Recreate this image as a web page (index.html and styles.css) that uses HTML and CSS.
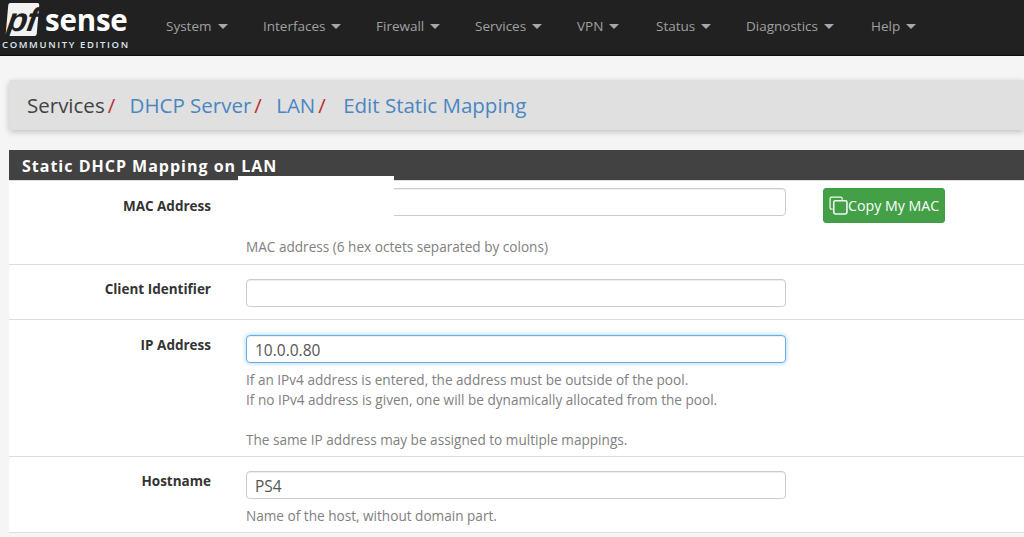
FILE: index.html
```html
<!DOCTYPE html>
<html lang="en">
<head>
<meta charset="utf-8">
<title>Static DHCP Mapping on LAN</title>
<link rel="stylesheet" href="styles.css">
</head>
<body>
<nav class="navbar">
  <div class="brand">
    <div class="logo-top"><span class="pf"><span class="pf-text">pf</span></span><span class="sense">sense</span></div>
    <div class="edition">COMMUNITY EDITION</div>
  </div>
  <ul class="menu">
    <li class="m1">System<i class="caret"></i></li>
    <li class="m2">Interfaces<i class="caret"></i></li>
    <li class="m3">Firewall<i class="caret"></i></li>
    <li class="m4">Services<i class="caret"></i></li>
    <li class="m5">VPN<i class="caret"></i></li>
    <li class="m6">Status<i class="caret"></i></li>
    <li class="m7">Diagnostics<i class="caret"></i></li>
    <li class="m8">Help<i class="caret"></i></li>
  </ul>
</nav>
<main class="content">
  <div class="crumbs">
    <span>Services</span><span class="sep">/</span>
    <a>DHCP Server</a><span class="sep">/</span>
    <a>LAN</a><span class="sep sep-last">/</span>
    <a>Edit Static Mapping</a>
  </div>
  <section class="panel">
    <h2 class="panel-title">Static DHCP Mapping on LAN</h2>
    <div class="mask"></div>
    <div class="row row-mac">
      <label>MAC Address</label>
      <div class="field">
        <input class="input" type="text">
        <p class="help help-mac">MAC address (6 hex octets separated by colons)</p>
      </div>
      <button class="btn" type="button">
        <svg class="copy" viewBox="0 0 18 18" width="19" height="19" aria-hidden="true"><path d="M3.500 12.500H2.500A1.500 1.500 0 0 1 1 11V2.500A1.500 1.500 0 0 1 2.500 1H11A1.500 1.500 0 0 1 12.500 2.500V3.500" fill="none" stroke="currentColor" stroke-width="1.200"/><rect x="4.500" y="4.500" width="12.500" height="12.500" rx="1.500" fill="none" stroke="currentColor" stroke-width="1.500"/></svg>Copy My MAC
      </button>
    </div>
    <div class="row row-client">
      <label>Client Identifier</label>
      <div class="field"><input class="input" type="text"></div>
    </div>
    <div class="row row-ip">
      <label>IP Address</label>
      <div class="field">
        <input class="input focus" type="text" value="10.0.0.80">
        <p class="help">If an IPv4 address is entered, the address must be outside of the pool.<br>If no IPv4 address is given, one will be dynamically allocated from the pool.<br><br>The same IP address may be assigned to multiple mappings.</p>
      </div>
    </div>
    <div class="row row-host">
      <label>Hostname</label>
      <div class="field">
        <input class="input" type="text" value="PS4">
        <p class="help help-host">Name of the host, without domain part.</p>
      </div>
    </div>
  </section>
</main>
</body>
</html>
```
FILE: styles.css
```css
* { box-sizing: border-box; }
html, body { margin: 0; height: 537px; overflow: hidden; }
body { background: #f5f5f5; font-family: "Open Sans", sans-serif; color: #333; }

.navbar { height: 56px; background: #212121; border-bottom: 1px solid #0d0d0d; display: flex; }
.brand { width: 166px; padding: 2px 0 0 2px; flex: none; }
.logo-top { display: flex; align-items: center; height: 35px; padding-left: 5px; }
.pf { display: block; flex: none; width: 31px; height: 33px; background: #f2f2f2; border-radius: 2px; transform: skewX(-5deg); text-align: center; }
.pf-text { display: block; color: #212121; font: italic 700 33px/33px "Liberation Sans", sans-serif; letter-spacing: -1px; transform: skewX(-4deg); }
.sense { color: #fff; font: 700 29.500px/28px "Open Sans", sans-serif; margin-left: 7px; letter-spacing: -.2px; }
.edition { color: #dfe6ee; font: 600 9.500px/12px "Open Sans", sans-serif; letter-spacing: 1.620px; margin-top: 2px; white-space: nowrap; }
.menu { list-style: none; margin: 0; padding: 0; display: flex; font-size: 13.500px; color: #a0a0a0; line-height: 52px; }
.menu li { white-space: nowrap; }
.m1 { width: 97px; } .m2 { width: 113px; } .m3 { width: 99px; } .m4 { width: 102px; }
.m5 { width: 79px; } .m6 { width: 90px; } .m7 { width: 125px; }
.caret { display: inline-block; margin-left: 6px; vertical-align: 2px; border-top: 5px solid #a8a8a8; border-left: 5px solid transparent; border-right: 5px solid transparent; }

.content { padding: 24px 0 0 9px; }
.crumbs { height: 50px; background: #e0e0e0; border-radius: 3px 0 0 3px; box-shadow: 0 2px 6px rgba(0,0,0,.22); padding-left: 18px; font-size: 20.500px; line-height: 50px; white-space: nowrap; color: #424242; }
.crumbs a { color: #4a86c0; }
.sep { color: #b5322f; margin: 0 9px 0 3px; }
.sep-last { margin-right: 12px; }

.panel { position: relative; margin-top: 20px; background: #fff; }
.panel-title { margin: 0; height: 31px; background: #424242; border-bottom: 1px solid #ddd; color: #fff; font-size: 16px; font-weight: 700; letter-spacing: 1px; line-height: 32px; padding-left: 13px; }
.mask { position: absolute; z-index: 1; left: 229px; top: 26px; width: 156px; height: 56px; background: #fff; }

.row { display: flex; align-items: flex-start; border-bottom: 1px solid #ddd; position: relative; }
.row label { width: 202px; flex: none; text-align: right; font-size: 13.500px; font-weight: 700; color: #333; }
.field { width: 540px; margin-left: 35px; flex: none; }
.input { display: block; width: 100%; height: 28px; border: 1px solid #ccc; border-radius: 4px; padding: 1px 8px 0; font: 15.500px "Open Sans", sans-serif; color: #555; background: #fff; outline: none; box-shadow: inset 0 1px 1px rgba(0,0,0,.07); }
.focus { border-color: #66afe9; box-shadow: inset 0 1px 1px rgba(0,0,0,.07), 0 0 5px rgba(102,175,233,.6); }
.help { margin: 0; font-size: 13.600px; line-height: 20px; color: #808080; }

.row-mac { height: 84px; padding-top: 7px; }
.row-mac label { padding-top: 8px; line-height: 20px; }
.help-mac { margin-top: 21px; }
.btn { margin-left: 37px; width: 122px; height: 35px; border: 1px solid #3e9c42; border-radius: 3px; background: #43a047; color: #fff; font: 14.200px "Open Sans", sans-serif; padding: 0 0 0 5px; display: flex; align-items: center; white-space: nowrap; }
.copy { flex: none; color: #f0f7f0; }

.row-client { height: 55px; padding-top: 14px; }
.row-client label { line-height: 20px; }

.row-ip { height: 137px; padding-top: 15px; }
.row-ip label { line-height: 20px; }
.row-ip .help { margin-top: 7px; }

.row-host { height: 76px; padding-top: 14px; }
.row-host label { line-height: 20px; }
.help-host { margin-top: 7px; }
```
